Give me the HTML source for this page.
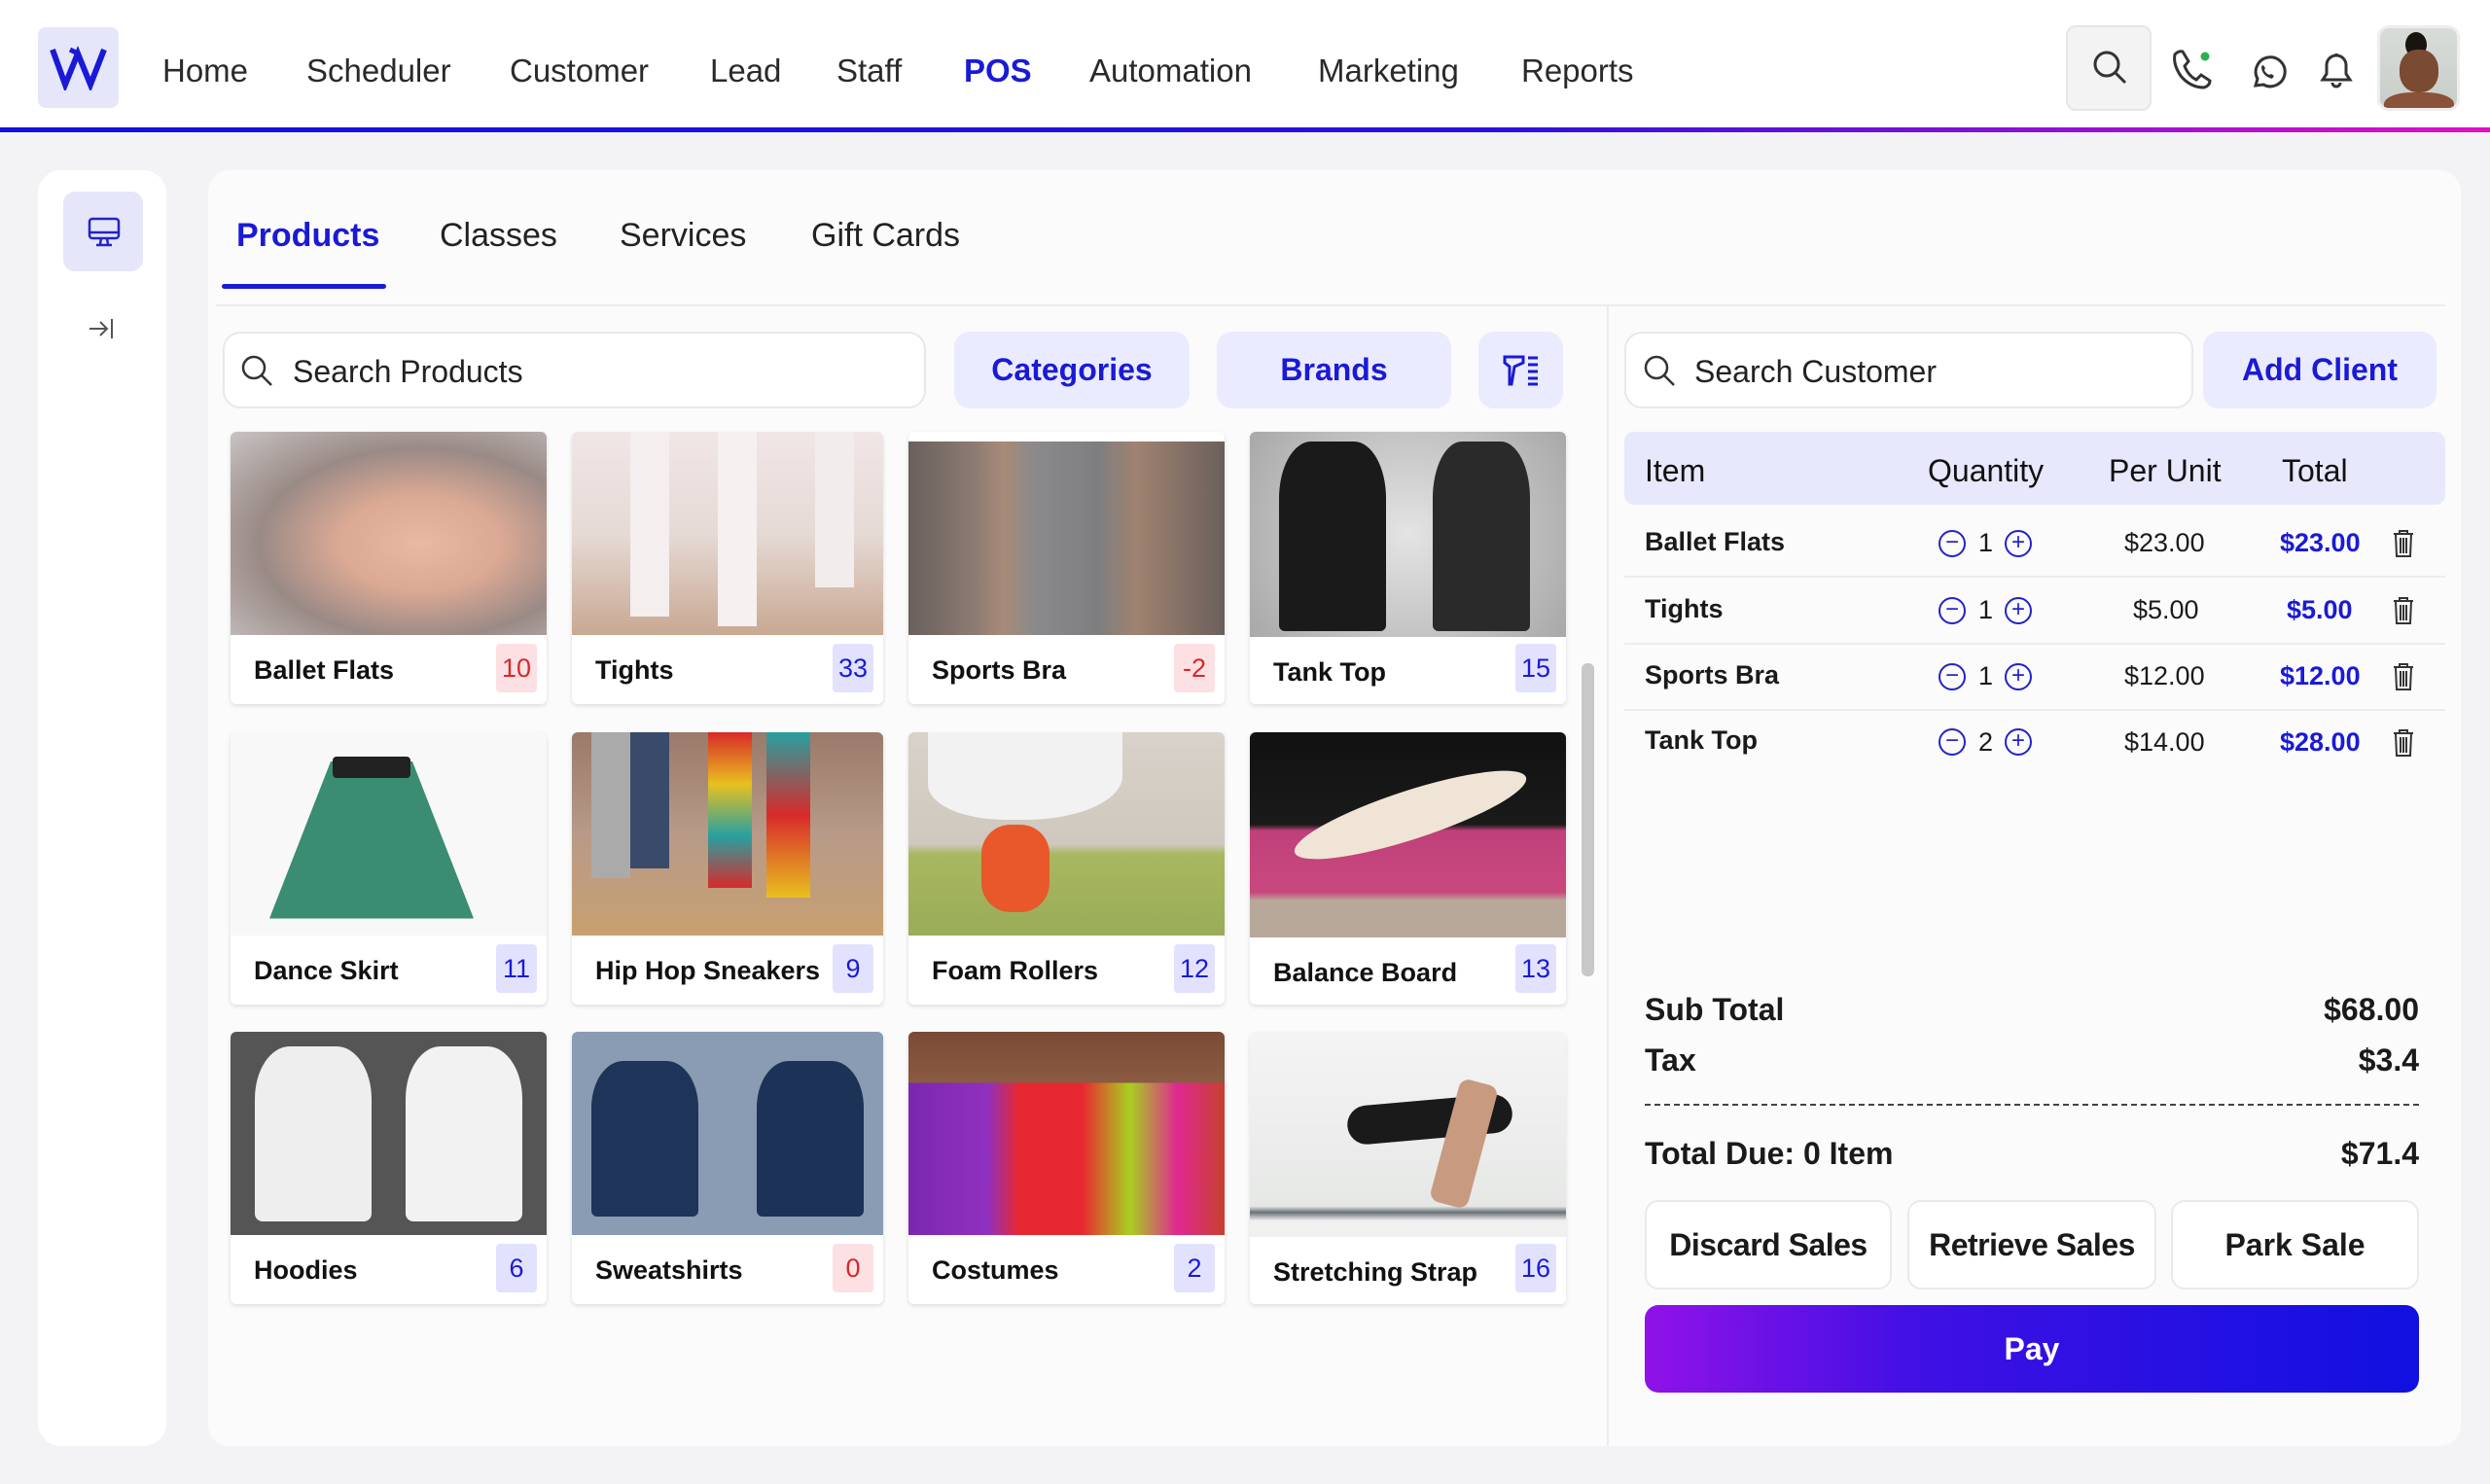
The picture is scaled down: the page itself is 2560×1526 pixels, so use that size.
<!DOCTYPE html>
<html><head><meta charset="utf-8"><style>
*{box-sizing:border-box;margin:0;padding:0}
body{width:2560px;height:1526px;background:#f3f3f5;font-family:"Liberation Sans",Arial,sans-serif;color:#1a1a1a;position:relative;overflow:hidden}
.a{position:absolute}
.nav{left:0;top:0;width:2560px;height:131px;background:#fff}
.line{left:0;top:131px;width:2560px;height:5px;background:linear-gradient(90deg,#1010e0 0%,#2a10e0 60%,#e010c8 100%)}
.ni{top:54px;font-size:33px;color:#2a2a2a}
.tab{top:223px;font-size:34px;color:#222}
.btn{background:#ebebff;border-radius:16px;color:#1a1ad6;font-weight:bold;font-size:32px;display:flex;align-items:center;justify-content:center}
.card{background:#fff;border-radius:6px;box-shadow:0 2px 5px rgba(0,0,0,.12);overflow:hidden}
.img{position:absolute;left:0;top:0;width:100%;height:209px;overflow:hidden}
.lbl{position:absolute;left:24px;top:230px;font-size:27px;font-weight:bold;color:#111}
.bd{position:absolute;right:10px;top:218px;width:42px;height:50px;border-radius:4px;display:flex;align-items:center;justify-content:center;font-size:27px}
.r{background:#fde0e3;color:#d42a2a}.b{background:#e2e2ff;color:#1a1ad6}
.th{top:466px;font-size:32px;color:#111}
.row{font-size:27px}
.sep{left:1670px;width:844px;height:2px;background:#ececec}
.q{width:28px;height:28px;border:2px solid #2323c8;border-radius:50%;color:#2323c8;font-size:24px;line-height:22px;text-align:center}
.tot{font-size:32px;font-weight:bold}
.ob{border:2px solid #eaeaea;border-radius:14px;background:#fff;font-size:32px;font-weight:bold;display:flex;align-items:center;justify-content:center;top:1234px;height:92px}
</style></head><body>
<div class="a nav"></div>
<div class="a line"></div>
<div class="a" style="left:39px;top:28px;width:83px;height:83px;background:#e6e6fb;border-radius:8px"></div>
<svg class="a" style="left:50px;top:45px" width="62" height="48" viewBox="0 0 62 48"><path d="M4 6 L17 42 L30 10 L43 42 L57 6" fill="none" stroke="#1a1ad6" stroke-width="6" stroke-linejoin="miter"/><path d="M22 6 L30 10" stroke="#1a1ad6" stroke-width="5"/></svg>
<div class="a ni" style="left:167px">Home</div>
<div class="a ni" style="left:315px">Scheduler</div>
<div class="a ni" style="left:524px">Customer</div>
<div class="a ni" style="left:730px">Lead</div>
<div class="a ni" style="left:860px">Staff</div>
<div class="a ni" style="left:991px;color:#1a1ad6;font-weight:bold">POS</div>
<div class="a ni" style="left:1120px">Automation</div>
<div class="a ni" style="left:1355px">Marketing</div>
<div class="a ni" style="left:1564px">Reports</div>
<div class="a" style="left:2124px;top:26px;width:88px;height:88px;background:#f3f3f3;border:2px solid #e6e6e6;border-radius:10px"></div>
<svg class="a" style="left:2150px;top:50px" width="40" height="40" viewBox="0 0 40 40"><circle cx="16" cy="16" r="12" fill="none" stroke="#333" stroke-width="3"/><path d="M25 25 L35 35" stroke="#333" stroke-width="3"/></svg>
<svg class="a" style="left:2232px;top:50px" width="46" height="42" viewBox="0 0 46 42"><path d="M4 6 Q8 2 12 3 L18 13 L14 18 Q18 28 26 32 L31 27 L40 33 Q40 38 34 40 Q20 40 10 28 Q2 16 4 6Z" fill="none" stroke="#333" stroke-width="3"/><circle cx="35" cy="8" r="4.5" fill="#2bb24c"/></svg>
<svg class="a" style="left:2311px;top:54px" width="40" height="40" viewBox="0 0 40 40"><path d="M8 34 L10 27 A15 15 0 1 1 16 33 Z" fill="none" stroke="#333" stroke-width="3"/><path d="M14 14 Q14 24 25 27 L27 24 L24 22 L22 23 Q18 21 17 18 L18 16 L16 13Z" fill="#333"/></svg>
<svg class="a" style="left:2384px;top:52px" width="36" height="40" viewBox="0 0 36 40"><path d="M4 30 L32 30 L28 24 L28 15 A10 10 0 0 0 8 15 L8 24 Z M18 3 L18 5 M14 33 A4 4 0 0 0 22 33" fill="none" stroke="#333" stroke-width="3"/></svg>
<div class="a" style="left:2444px;top:26px;width:85px;height:88px;border:3px solid #eee;border-radius:12px;background:linear-gradient(180deg,#d8dcd8,#c8cec9);overflow:hidden">
<div class="a" style="left:26px;top:4px;width:22px;height:26px;background:#1a1410;border-radius:50%"></div>
<div class="a" style="left:20px;top:22px;width:40px;height:44px;background:#7a4a32;border-radius:45%"></div>
<div class="a" style="left:4px;top:66px;width:72px;height:30px;background:#8a5238;border-radius:40% 40% 0 0"></div></div>

<div class="a" style="left:39px;top:175px;width:132px;height:1312px;background:#fff;border-radius:24px"></div>
<div class="a" style="left:65px;top:197px;width:82px;height:82px;background:#e6e6fb;border-radius:12px"></div>
<svg class="a" style="left:90px;top:223px" width="34" height="32" viewBox="0 0 34 32"><rect x="2" y="2" width="30" height="20" rx="3" fill="none" stroke="#2323c8" stroke-width="2.5"/><path d="M2 16 L32 16 M14 22 L13 28 M20 22 L21 28 M9 29 L25 29" stroke="#2323c8" stroke-width="2.5" fill="none"/></svg>
<svg class="a" style="left:90px;top:325px" width="30" height="26" viewBox="0 0 30 26"><path d="M2 13 L20 13 M13 6 L20 13 L13 20 M25 3 L25 23" stroke="#555" stroke-width="2" fill="none"/></svg>

<div class="a" style="left:214px;top:175px;width:2316px;height:1312px;background:#fbfbfb;border-radius:22px"></div>
<div class="a tab" style="left:243px;color:#1a1ad6;font-weight:bold">Products</div>
<div class="a tab" style="left:452px">Classes</div>
<div class="a tab" style="left:637px">Services</div>
<div class="a tab" style="left:834px">Gift Cards</div>
<div class="a" style="left:228px;top:292px;width:169px;height:5px;background:#1a1ad6;border-radius:3px"></div>
<div class="a" style="left:222px;top:313px;width:2292px;height:2px;background:#ececec"></div>

<div class="a" style="left:229px;top:341px;width:723px;height:79px;background:#fff;border:2px solid #e8e8e8;border-radius:18px"></div>
<svg class="a" style="left:247px;top:364px" width="36" height="36" viewBox="0 0 36 36"><circle cx="14" cy="14" r="11" fill="none" stroke="#333" stroke-width="2.5"/><path d="M22 22 L32 32" stroke="#333" stroke-width="2.5"/></svg>
<div class="a" style="left:301px;top:364px;font-size:32px;color:#222">Search Products</div>
<div class="a btn" style="left:981px;top:341px;width:242px;height:79px">Categories</div>
<div class="a btn" style="left:1251px;top:341px;width:241px;height:79px">Brands</div>
<div class="a btn" style="left:1520px;top:341px;width:87px;height:79px"><svg width="40" height="36" viewBox="0 0 40 36"><path d="M3 4 L22 4 L22 10 L13 14 L10 32 L8 32 L8 14 L3 10 Z" fill="none" stroke="#1a1ad6" stroke-width="3"/><path d="M27 5 L37 5 M27 12 L37 12 M27 19 L37 19 M27 26 L37 26 M27 32 L37 32" stroke="#1a1ad6" stroke-width="3"/></svg></div>

<!-- row 1 -->
<div class="a card" style="left:237px;top:444px;width:325px;height:280px"><div class="img" style="background:radial-gradient(ellipse at 60% 55%,#e8b9a4 0%,#dba994 30%,#9a8a86 60%,#c8c4c4 100%)"></div><div class="lbl">Ballet Flats</div><div class="bd r">10</div></div>
<div class="a card" style="left:588px;top:444px;width:320px;height:280px"><div class="img" style="background:linear-gradient(180deg,#f1e6e6 0%,#e6dad6 50%,#c8a892 100%)"><div class="a" style="left:60px;top:0;width:40px;height:190px;background:#f4eeee"></div><div class="a" style="left:150px;top:0;width:40px;height:200px;background:#f6f0f0"></div><div class="a" style="left:250px;top:0;width:40px;height:160px;background:#f2ecec"></div></div><div class="lbl">Tights</div><div class="bd b">33</div></div>
<div class="a card" style="left:934px;top:444px;width:325px;height:280px"><div class="img" style="top:10px;height:199px;background:linear-gradient(90deg,#6a605c,#8a7a72 20%,#a88a78 30%,#8a8a8c 40%,#7e7e80 60%,#a08270 72%,#6a605c 100%)"></div><div class="lbl">Sports Bra</div><div class="bd r">-2</div></div>
<div class="a card" style="left:1285px;top:444px;width:325px;height:280px"><div class="img" style="height:211px;background:radial-gradient(circle,#e4e4e4,#a8a8a8)"><div class="a" style="left:30px;top:10px;width:110px;height:195px;background:#1a1a1a;border-radius:30% 30% 6px 6px"></div><div class="a" style="left:188px;top:10px;width:100px;height:195px;background:#2a2a2a;border-radius:30% 30% 6px 6px"></div></div><div class="lbl" style="top:232px">Tank Top</div><div class="bd b">15</div></div>
<!-- row 2 -->
<div class="a card" style="left:237px;top:753px;width:325px;height:280px"><div class="img" style="background:#f8f8f8"><div class="a" style="left:40px;top:30px;width:210px;height:170px;background:#3a8c72;clip-path:polygon(30% 0,70% 0,100% 95%,0 95%)"></div><div class="a" style="left:105px;top:25px;width:80px;height:22px;background:#222;border-radius:4px"></div></div><div class="lbl">Dance Skirt</div><div class="bd b">11</div></div>
<div class="a card" style="left:588px;top:753px;width:320px;height:280px"><div class="img" style="background:linear-gradient(180deg,#9a7a6a 0%,#b89a88 50%,#c8a070 100%)"><div class="a" style="left:20px;top:0;width:40px;height:150px;background:#aaa"></div><div class="a" style="left:60px;top:0;width:40px;height:140px;background:#3a4a6a"></div><div class="a" style="left:140px;top:0;width:45px;height:160px;background:linear-gradient(#d82a2a,#e8c020,#28a0a0,#d82a2a)"></div><div class="a" style="left:200px;top:0;width:45px;height:170px;background:linear-gradient(#28a0a0,#d82a2a,#e8c020)"></div></div><div class="lbl">Hip Hop Sneakers</div><div class="bd b">9</div></div>
<div class="a card" style="left:934px;top:753px;width:325px;height:280px"><div class="img" style="background:linear-gradient(180deg,#d8d2ca 0%,#cfc8be 55%,#a8b860 60%,#9aac58 100%)"><div class="a" style="left:20px;top:0;width:200px;height:90px;background:#f2f2f2;border-radius:0 0 50% 40%"></div><div class="a" style="left:75px;top:95px;width:70px;height:90px;background:#e8582a;border-radius:30px"></div></div><div class="lbl">Foam Rollers</div><div class="bd b">12</div></div>
<div class="a card" style="left:1285px;top:753px;width:325px;height:280px"><div class="img" style="height:211px;background:linear-gradient(180deg,#111 0%,#1a1a1a 45%,#c0407a 48%,#c8487e 78%,#b8a89a 82%)"><div class="a" style="left:40px;top:60px;width:250px;height:50px;background:#f0e4d6;border-radius:50%;transform:rotate(-18deg)"></div></div><div class="lbl" style="top:232px">Balance Board</div><div class="bd b">13</div></div>
<!-- row 3 -->
<div class="a card" style="left:237px;top:1061px;width:325px;height:280px"><div class="img" style="background:#555"><div class="a" style="left:25px;top:15px;width:120px;height:180px;background:#eee;border-radius:30% 30% 8px 8px"></div><div class="a" style="left:180px;top:15px;width:120px;height:180px;background:#f2f2f2;border-radius:30% 30% 8px 8px"></div></div><div class="lbl">Hoodies</div><div class="bd b">6</div></div>
<div class="a card" style="left:588px;top:1061px;width:320px;height:280px"><div class="img" style="background:#8a9bb4"><div class="a" style="left:20px;top:30px;width:110px;height:160px;background:#1e3458;border-radius:30% 30% 6px 6px"></div><div class="a" style="left:190px;top:30px;width:110px;height:160px;background:#1c3256;border-radius:30% 30% 6px 6px"></div></div><div class="lbl">Sweatshirts</div><div class="bd r">0</div></div>
<div class="a card" style="left:934px;top:1061px;width:325px;height:280px"><div class="img" style="background:linear-gradient(180deg,#7a4a36 0%,#8a5a42 25%,transparent 25%),linear-gradient(90deg,#7a28b0 0%,#9030c0 25%,#e82830 35%,#e82830 55%,#a8d020 70%,#e02890 85%,#c84030 100%)"></div><div class="lbl">Costumes</div><div class="bd b">2</div></div>
<div class="a card" style="left:1285px;top:1061px;width:325px;height:280px"><div class="img" style="height:211px;background:linear-gradient(180deg,#f4f4f4 0%,#e6e8e6 85%,#6a7078 88%,#f0f0f0 92%)"><div class="a" style="left:100px;top:70px;width:170px;height:40px;background:#1a1a1a;border-radius:20px;transform:rotate(-5deg)"></div><div class="a" style="left:200px;top:50px;width:40px;height:130px;background:#c89a80;border-radius:10px;transform:rotate(15deg)"></div></div><div class="lbl" style="top:232px">Stretching Strap</div><div class="bd b">16</div></div>

<div class="a" style="left:1626px;top:682px;width:13px;height:322px;background:#c8c8c8;border-radius:6px"></div>
<div class="a" style="left:1652px;top:313px;width:2px;height:1174px;background:#ececec"></div>

<!-- right -->
<div class="a" style="left:1670px;top:341px;width:585px;height:79px;background:#fff;border:2px solid #e8e8e8;border-radius:18px"></div>
<svg class="a" style="left:1689px;top:364px" width="36" height="36" viewBox="0 0 36 36"><circle cx="14" cy="14" r="11" fill="none" stroke="#333" stroke-width="2.5"/><path d="M22 22 L32 32" stroke="#333" stroke-width="2.5"/></svg>
<div class="a" style="left:1742px;top:364px;font-size:32px;color:#222">Search Customer</div>
<div class="a btn" style="left:2265px;top:341px;width:240px;height:79px">Add Client</div>

<div class="a" style="left:1670px;top:444px;width:844px;height:75px;background:#e8e8fc;border-radius:10px"></div>
<div class="a th" style="left:1691px">Item</div>
<div class="a th" style="left:1982px">Quantity</div>
<div class="a th" style="left:2168px">Per Unit</div>
<div class="a th" style="left:2346px">Total</div>

<div class="a sep" style="top:592px"></div><div class="a sep" style="top:661px"></div><div class="a sep" style="top:729px"></div>

<div class="a row" style="left:1691px;top:542px;font-weight:bold">Ballet Flats</div>
<div class="a row" style="left:1691px;top:611px;font-weight:bold">Tights</div>
<div class="a row" style="left:1691px;top:679px;font-weight:bold">Sports Bra</div>
<div class="a row" style="left:1691px;top:746px;font-weight:bold">Tank Top</div>

<div class="a q" style="left:1993px;top:545px">−</div><div class="a row" style="left:2034px;top:543px">1</div><div class="a q" style="left:2061px;top:545px">+</div>
<div class="a q" style="left:1993px;top:614px">−</div><div class="a row" style="left:2034px;top:612px">1</div><div class="a q" style="left:2061px;top:614px">+</div>
<div class="a q" style="left:1993px;top:682px">−</div><div class="a row" style="left:2034px;top:680px">1</div><div class="a q" style="left:2061px;top:682px">+</div>
<div class="a q" style="left:1993px;top:749px">−</div><div class="a row" style="left:2034px;top:748px">2</div><div class="a q" style="left:2061px;top:749px">+</div>

<div class="a row" style="left:2184px;top:543px">$23.00</div>
<div class="a row" style="left:2193px;top:612px">$5.00</div>
<div class="a row" style="left:2184px;top:680px">$12.00</div>
<div class="a row" style="left:2184px;top:748px">$14.00</div>
<div class="a row" style="left:2344px;top:543px;color:#1a1ad6;font-weight:bold">$23.00</div>
<div class="a row" style="left:2351px;top:612px;color:#1a1ad6;font-weight:bold">$5.00</div>
<div class="a row" style="left:2344px;top:680px;color:#1a1ad6;font-weight:bold">$12.00</div>
<div class="a row" style="left:2344px;top:748px;color:#1a1ad6;font-weight:bold">$28.00</div>
<svg class="a" style="left:2459px;top:544px" width="24" height="30" viewBox="0 0 24 30"><path d="M2 5 L22 5 M8 5 L8 2 L16 2 L16 5 M4 5 L5 28 L19 28 L20 5 M9 9 L9 25 M12 9 L12 25 M15 9 L15 25" fill="none" stroke="#333" stroke-width="2"/></svg>
<svg class="a" style="left:2459px;top:613px" width="24" height="30" viewBox="0 0 24 30"><path d="M2 5 L22 5 M8 5 L8 2 L16 2 L16 5 M4 5 L5 28 L19 28 L20 5 M9 9 L9 25 M12 9 L12 25 M15 9 L15 25" fill="none" stroke="#333" stroke-width="2"/></svg>
<svg class="a" style="left:2459px;top:681px" width="24" height="30" viewBox="0 0 24 30"><path d="M2 5 L22 5 M8 5 L8 2 L16 2 L16 5 M4 5 L5 28 L19 28 L20 5 M9 9 L9 25 M12 9 L12 25 M15 9 L15 25" fill="none" stroke="#333" stroke-width="2"/></svg>
<svg class="a" style="left:2459px;top:749px" width="24" height="30" viewBox="0 0 24 30"><path d="M2 5 L22 5 M8 5 L8 2 L16 2 L16 5 M4 5 L5 28 L19 28 L20 5 M9 9 L9 25 M12 9 L12 25 M15 9 L15 25" fill="none" stroke="#333" stroke-width="2"/></svg>

<div class="a tot" style="left:1691px;top:1020px">Sub Total</div>
<div class="a tot" style="right:73px;top:1020px">$68.00</div>
<div class="a tot" style="left:1691px;top:1072px">Tax</div>
<div class="a tot" style="right:73px;top:1072px">$3.4</div>
<div class="a" style="left:1691px;top:1135px;width:796px;border-top:2px dashed #444"></div>
<div class="a tot" style="left:1691px;top:1168px">Total Due: 0 Item</div>
<div class="a tot" style="right:73px;top:1168px">$71.4</div>

<div class="a ob" style="left:1691px;width:254px;letter-spacing:-0.5px">Discard Sales</div>
<div class="a ob" style="left:1961px;width:256px;letter-spacing:-0.5px">Retrieve Sales</div>
<div class="a ob" style="left:2232px;width:255px">Park Sale</div>
<div class="a" style="left:1691px;top:1342px;width:796px;height:90px;border-radius:14px;background:linear-gradient(90deg,#9012e8 0%,#4010e4 35%,#1010e0 100%);color:#fff;font-size:32px;font-weight:bold;display:flex;align-items:center;justify-content:center">Pay</div>
</body></html>
